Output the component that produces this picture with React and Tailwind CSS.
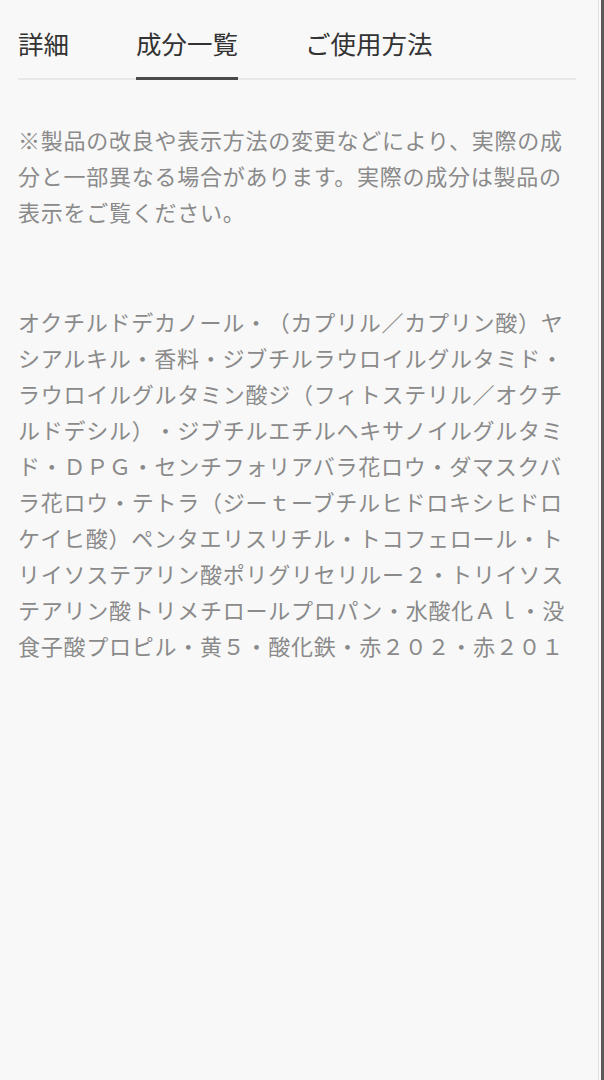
import React from 'react';

const tabs = [
    { id: 'detail', label: '詳細' },
    { id: 'ingredients', label: '成分一覧' },
    { id: 'usage', label: 'ご使用方法' },
];

const note = '※製品の改良や表示方法の変更などにより、実際の成分と一部異なる場合があります。実際の成分は製品の表示をご覧ください。';

const ingredients = 'オクチルドデカノール・（カプリル／カプリン酸）ヤシアルキル・香料・ジブチルラウロイルグルタミド・ラウロイルグルタミン酸ジ（フィトステリル／オクチルドデシル）・ジブチルエチルヘキサノイルグルタミド・ＤＰＧ・センチフォリアバラ花ロウ・ダマスクバラ花ロウ・テトラ（ジーｔーブチルヒドロキシヒドロケイヒ酸）ペンタエリスリチル・トコフェロール・トリイソステアリン酸ポリグリセリルー２・トリイソステアリン酸トリメチロールプロパン・水酸化Ａｌ・没食子酸プロピル・黄５・酸化鉄・赤２０２・赤２０１';

const App = () => {
    const active = 'ingredients';

    return (
        <div className="flex min-h-screen w-[604px] bg-[#f8f8f8]" style={{ fontFamily: '"Noto Sans CJK JP", "Noto Sans", sans-serif' }}>
            <div className="flex-1">
                <div className="ml-[18px] w-[558px] [text-spacing-trim:space-all]">

                    {/* Tabs */}
                    <div className="flex gap-[67px] border-b-2 border-[#e8e8e8] pt-[25px]">
                        {tabs.map((tab) => (
                            <div
                                key={tab.id}
                                className={`-mb-[2px] pb-[16px] text-[25.5px] leading-[36px] text-[#333333] ${tab.id === active ? 'border-b-[3px] border-[#4a4a4a]' : 'border-b-[3px] border-transparent'}`}
                            >
                                {tab.label}
                            </div>
                        ))}
                    </div>

                    {/* Note */}
                    <p className="mt-[41px] text-[22px] leading-[36px] tracking-[0.75px] text-[#8a8a8a]">{note}</p>

                    {/* Ingredients */}
                    <p className="mt-[74px] text-[22px] leading-[36px] tracking-[0.75px] text-[#8a8a8a]">{ingredients}</p>

                </div>
            </div>
            <div className="w-px bg-[#e2e2e2]" />
            <div className="w-[2px]" />
            <div className="w-[3px] bg-[#5a5a5a]" />
        </div>
    );
};

export default App;
